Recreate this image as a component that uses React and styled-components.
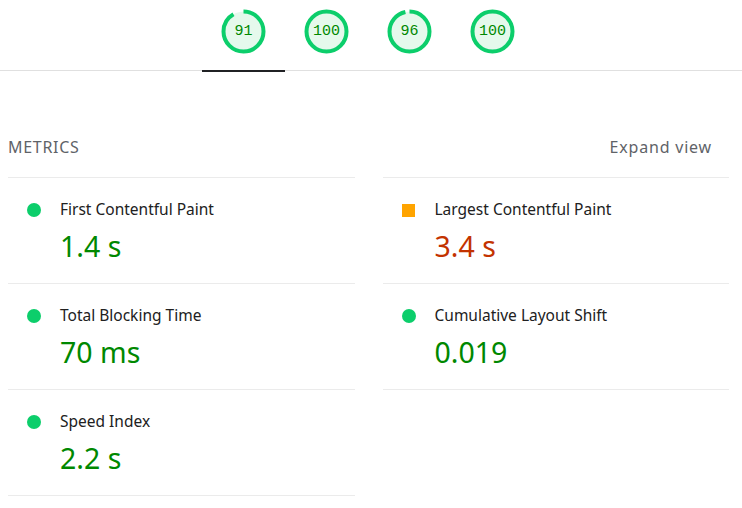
import React from "react";
import styled, { createGlobalStyle } from "styled-components";

const Global = createGlobalStyle`
  html, body { margin: 0; padding: 0; background: #fff; }
  body { font-family: "Noto Sans", "Open Sans", sans-serif; color: #212121; }
`;

const Page = styled.div`
  width: 742px;
  height: 508px;
  overflow: hidden;
`;

const TabBar = styled.div`
  display: flex;
  justify-content: center;
  padding-right: 6px;
  border-bottom: 1px solid #e0e0e0;
  height: 71px;
  box-sizing: border-box;
`;

const Tab = styled.div`
  width: 83px;
  height: 72px;
  box-sizing: border-box;
  display: flex;
  justify-content: center;
  padding-top: 9px;
  border-bottom: 2px solid ${(p) => (p.$active ? "#202124" : "transparent")};
  margin-bottom: -2px;
`;

const GaugeBox = styled.div`
  position: relative;
  width: 45px;
  height: 45px;
`;

const GaugeLabel = styled.div`
  position: absolute;
  inset: 0;
  display: flex;
  align-items: center;
  justify-content: center;
  font-family: "Liberation Mono", "DejaVu Sans Mono", monospace;
  font-size: 15px;
  color: #008800;
`;

const Section = styled.div`
  padding: 0 13px 0 8px;
`;

const Header = styled.div`
  display: flex;
  justify-content: space-between;
  align-items: flex-start;
  height: 106px;
  padding-top: 65px;
  box-sizing: border-box;
  padding-right: 17px;
`;

const HeaderTitle = styled.div`
  font-size: 16px;
  line-height: 22px;
  letter-spacing: 0.7px;
  color: #5f6368;
  text-transform: uppercase;
`;

const ExpandLink = styled.div`
  font-size: 16px;
  line-height: 22px;
  letter-spacing: 0.8px;
  color: #5f6368;
`;

const Grid = styled.div`
  display: grid;
  grid-template-columns: 1fr 1fr;
  column-gap: 28px;
  align-items: start;
`;

const Column = styled.div`
  display: flex;
  flex-direction: column;
  border-bottom: 1px solid #ebebeb;
`;

const Metric = styled.div`
  display: flex;
  height: 106px;
  box-sizing: border-box;
  border-top: 1px solid #ebebeb;
  padding: 22px 0 0 19px;
`;

const MarkerSlot = styled.div`
  width: 33px;
  flex: none;
  padding-top: 3px;
`;

const Dot = styled.div`
  width: 14px;
  height: 14px;
  border-radius: 50%;
  background: #0cce6b;
`;

const Square = styled.div`
  width: 13px;
  height: 13px;
  margin-top: 1px;
  background: #ffa400;
`;

const Body = styled.div`
  display: flex;
  flex-direction: column;
`;

const Title = styled.div`
  font-size: 15.5px;
  line-height: 19px;
  color: #212121;
`;

const Value = styled.div`
  margin-top: 8px;
  font-size: 28.5px;
  line-height: 38px;
  color: ${(p) => (p.$status === "average" ? "#c33300" : "#008800")};
`;

function Gauge({ score }) {
  const r = 20;
  const c = 2 * Math.PI * r;
  const len = (score / 100) * c;
  return (
    <GaugeBox>
      <svg width="45" height="45" viewBox="0 0 45 45">
        <circle cx="22.5" cy="22.5" r={r} fill="#e5f9ec" />
        <circle
          cx="22.5"
          cy="22.5"
          r={r}
          fill="none"
          stroke="#0cce6b"
          strokeWidth="4"
          strokeDasharray={`${len} ${c}`}
          transform="rotate(-90 22.5 22.5)"
        />
      </svg>
      <GaugeLabel>{score}</GaugeLabel>
    </GaugeBox>
  );
}

const scores = [91, 100, 96, 100];

const left = [
  { title: "First Contentful Paint", value: "1.4 s", status: "pass" },
  { title: "Total Blocking Time", value: "70 ms", status: "pass" },
  { title: "Speed Index", value: "2.2 s", status: "pass" },
];
const right = [
  { title: "Largest Contentful Paint", value: "3.4 s", status: "average" },
  { title: "Cumulative Layout Shift", value: "0.019", status: "pass" },
];

function MetricItem({ m }) {
  return (
    <Metric>
      <MarkerSlot>{m.status === "average" ? <Square /> : <Dot />}</MarkerSlot>
      <Body>
        <Title>{m.title}</Title>
        <Value $status={m.status}>{m.value}</Value>
      </Body>
    </Metric>
  );
}

export default function App() {
  return (
    <Page>
      <Global />
      <TabBar>
        {scores.map((s, i) => (
          <Tab key={i} $active={i === 0}>
            <Gauge score={s} />
          </Tab>
        ))}
      </TabBar>
      <Section>
        <Header>
          <HeaderTitle>Metrics</HeaderTitle>
          <ExpandLink>Expand view</ExpandLink>
        </Header>
        <Grid>
          <Column>
            {left.map((m) => (
              <MetricItem key={m.title} m={m} />
            ))}
          </Column>
          <Column>
            {right.map((m) => (
              <MetricItem key={m.title} m={m} />
            ))}
          </Column>
        </Grid>
      </Section>
    </Page>
  );
}
